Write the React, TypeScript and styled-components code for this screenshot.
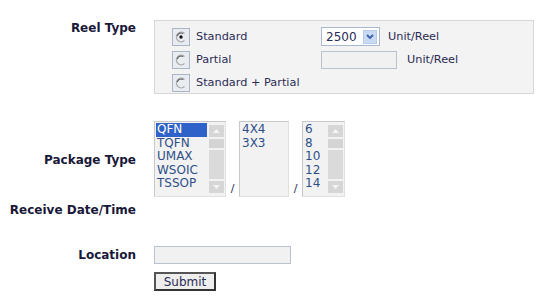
import React from "react";
import styled, { createGlobalStyle } from "styled-components";

const Global = createGlobalStyle`
  html, body { margin: 0; padding: 0; background: #ffffff; }
  body { font-family: "DejaVu Sans", Verdana, sans-serif; font-size: 11px; color: #2b2b55; }
`;

const Form = styled.div`
  display: flex;
  flex-direction: column;
  padding-top: 20px;
  width: 544px;
`;

const Row = styled.div<{ $mt?: number; $align?: string }>`
  display: grid;
  grid-template-columns: 136px 1fr;
  column-gap: 18px;
  align-items: ${(p) => p.$align || "center"};
  margin-top: ${(p) => p.$mt || 0}px;
`;

const Label = styled.div<{ $pt?: number }>`
  font-weight: bold;
  font-size: 12px;
  line-height: 14px;
  color: #181838;
  text-align: right;
  white-space: nowrap;
  padding-top: ${(p) => p.$pt || 0}px;
`;

const Panel = styled.div`
  width: 380px;
  height: 74px;
  box-sizing: border-box;
  background: #f3f3f3;
  border: 1px solid #d6d6d6;
  padding: 4px 0 0 17px;
  display: grid;
  grid-template-columns: 152px 1fr;
  grid-template-rows: 23px 23px 23px;
  font-size: 11.3px;
`;

const RadioRow = styled.label<{ $span?: boolean }>`
  display: flex;
  align-items: center;
  gap: 6px;
  color: #2b2b55;
  grid-column: ${(p) => (p.$span ? "1 / span 2" : "auto")};
`;

const RadioBox = styled.span`
  width: 18px;
  height: 18px;
  box-sizing: border-box;
  border: 1px solid #aab6c6;
  background: #e9edf2;
  display: flex;
  align-items: center;
  justify-content: center;
`;

const QtyRow = styled.div<{ $unitGap: number }>`
  display: flex;
  align-items: center;
  gap: ${(p) => p.$unitGap}px;
  margin-left: -3px;
`;

const SelectBox = styled.div`
  width: 59px;
  height: 19px;
  box-sizing: border-box;
  border: 1px solid #a9b8cc;
  background: #ffffff;
  display: flex;
  align-items: center;
  justify-content: space-between;
  padding: 0 2px 0 4px;
  font-size: 12px;
  color: #2b2b55;
`;

const DropBtn = styled.span`
  width: 14px;
  height: 14px;
  background: #c9daf4;
  border: 1px solid #b8cbe8;
  box-sizing: border-box;
  display: flex;
  align-items: center;
  justify-content: center;
`;

const TextBox = styled.div<{ $w: number }>`
  width: ${(p) => p.$w}px;
  height: 18px;
  box-sizing: border-box;
  border: 1px solid #b9c3cf;
  background: #f1f1f1;
`;

const Unit = styled.span`
  color: #2b2b55;
`;

const Lists = styled.div`
  display: flex;
  align-items: flex-end;
`;

const ListBox = styled.div<{ $w: number }>`
  width: ${(p) => p.$w}px;
  height: 76px;
  box-sizing: border-box;
  border: 1px solid #c8c8c8;
  border-right-color: #e0e0e0;
  border-bottom-color: #e0e0e0;
  background: #f2f2f2;
  display: flex;
  padding: 1px;
`;

const Items = styled.div`
  flex: 1;
  display: flex;
  flex-direction: column;
  font-size: 12px;
  line-height: 13.6px;
  color: #2f4f88;
`;

const Item = styled.div<{ $sel?: boolean }>`
  padding-left: 1px;
  background: ${(p) => (p.$sel ? "#2f62c8" : "transparent")};
  color: ${(p) => (p.$sel ? "#ffffff" : "#2f4f88")};
  margin-right: ${(p) => (p.$sel ? "2px" : "0")};
`;

const Scroll = styled.div`
  width: 15px;
  display: flex;
  flex-direction: column;
  gap: 2px;
  padding: 2px 0;
`;

const ScrollBtn = styled.div`
  height: 12px;
  background: #d6d6d6;
  display: flex;
  align-items: center;
  justify-content: center;
`;

const Thumb = styled.div`
  height: 9px;
  background: #d4d4d4;
`;

const Track = styled.div`
  flex: 1;
  background: #dadada;
`;

const Slash = styled.span<{ $w: number }>`
  width: ${(p) => p.$w}px;
  text-align: center;
  color: #2b2b55;
  padding-bottom: 2px;
`;

const Button = styled.button`
  font-family: "DejaVu Sans", Verdana, sans-serif;
  font-size: 12px;
  color: #2b2b55;
  background: #eeeeee;
  border: 2px solid #333333;
  border-top-color: #555;
  border-left-color: #555;
  width: 62px;
  height: 19px;
  padding: 0;
`;

const Empty = styled.div`
  height: 14px;
`;

function Radio({ checked }: { checked?: boolean }) {
  return (
    <RadioBox>
      <svg width="12" height="12" viewBox="0 0 12 12">
        <path d="M9.5 2.5 A4.8 4.8 0 1 0 9.5 9.5" fill="none" stroke="#a8a8a8" strokeWidth="1.3" />
        <path d="M8.2 2.6 A3.9 3.9 0 0 0 2.3 5.2" fill="none" stroke="#5c5c5c" strokeWidth="1.1" />
        {checked && <circle cx="6" cy="6" r="1.7" fill="#111" />}
      </svg>
    </RadioBox>
  );
}

function Chevron() {
  return (
    <svg width="8" height="6" viewBox="0 0 8 6">
      <path d="M1 1 L4 4 L7 1" fill="none" stroke="#3c5fa8" strokeWidth="1.8" />
    </svg>
  );
}

function Arrow({ up }: { up?: boolean }) {
  return (
    <svg width="7" height="4" viewBox="0 0 7 4">
      <path d={up ? "M0 4 L3.5 0 L7 4 Z" : "M0 0 L3.5 4 L7 0 Z"} fill="#f4f4f4" />
    </svg>
  );
}

function List({ items, width, selected, scroll }: { items: string[]; width: number; selected?: number; scroll?: boolean }) {
  return (
    <ListBox $w={width}>
      <Items>
        {items.map((it, i) => (
          <Item key={it} $sel={i === selected}>{it}</Item>
        ))}
      </Items>
      {scroll && (
        <Scroll>
          <ScrollBtn><Arrow up /></ScrollBtn>
          <Thumb />
          <Track />
          <ScrollBtn><Arrow /></ScrollBtn>
        </Scroll>
      )}
    </ListBox>
  );
}

export default function App() {
  return (
    <>
      <Global />
      <Form>
        <Row $align="start">
          <Label $pt={1}>Reel Type</Label>
          <Panel>
            <RadioRow><Radio checked />Standard</RadioRow>
            <QtyRow $unitGap={8}>
              <SelectBox>2500<DropBtn><Chevron /></DropBtn></SelectBox>
              <Unit>Unit/Reel</Unit>
            </QtyRow>
            <RadioRow><Radio />Partial</RadioRow>
            <QtyRow $unitGap={10}>
              <TextBox $w={76} />
              <Unit>Unit/Reel</Unit>
            </QtyRow>
            <RadioRow $span><Radio />Standard + Partial</RadioRow>
          </Panel>
        </Row>

        <Row $mt={27}>
          <Label $pt={2}>Package Type</Label>
          <Lists>
            <List width={72} selected={0} scroll items={["QFN", "TQFN", "UMAX", "WSOIC", "TSSOP"]} />
            <Slash $w={13}>/</Slash>
            <List width={50} items={["4X4", "3X3"]} />
            <Slash $w={13}>/</Slash>
            <List width={43} scroll items={["6", "8", "10", "12", "14"]} />
          </Lists>
        </Row>

        <Row $mt={6}>
          <Label>Receive Date/Time</Label>
          <Empty />
        </Row>

        <Row $mt={29}>
          <Label>Location</Label>
          <TextBox $w={137} />
        </Row>

        <Row $mt={8}>
          <div />
          <div><Button>Submit</Button></div>
        </Row>
      </Form>
    </>
  );
}
